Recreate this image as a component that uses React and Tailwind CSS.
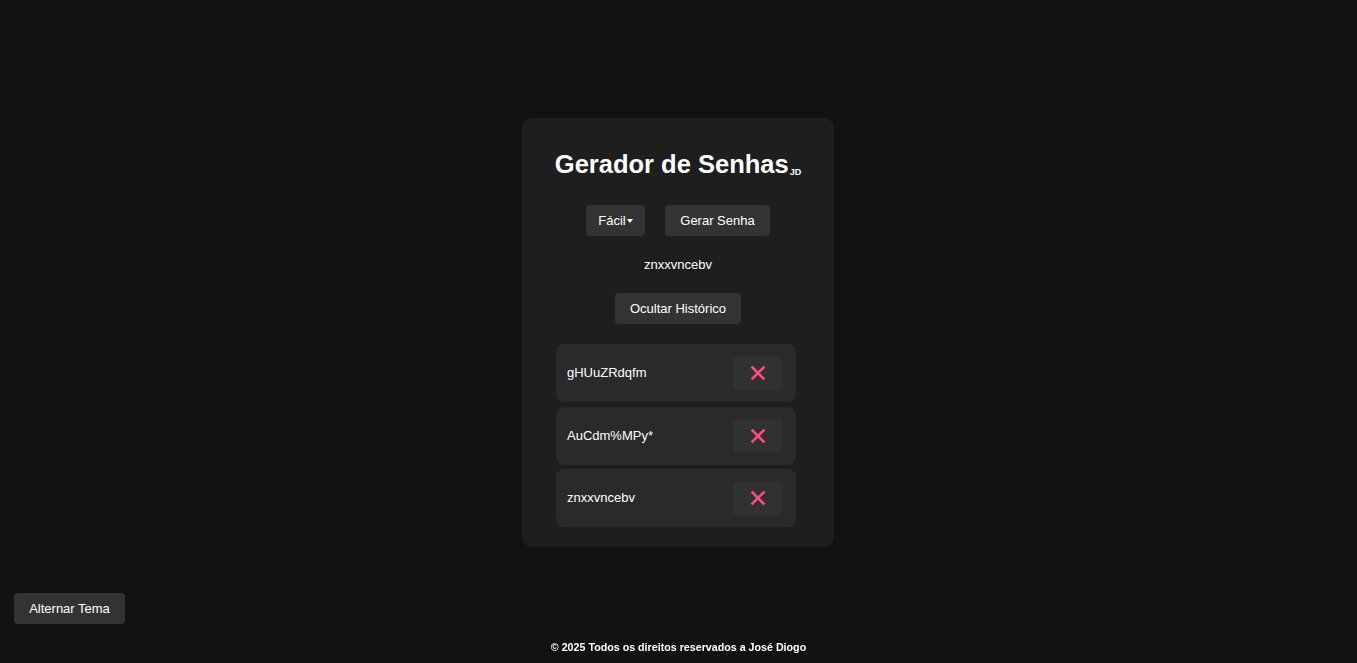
import React, { useState } from 'react';

const XIcon = () => (
  <svg width="16" height="16" viewBox="0 0 16 16" fill="none">
    <path d="M2.5 2.5 L13.5 13.5 M13.5 2.5 L2.5 13.5" stroke="#ff4d7d" strokeWidth="2.6" strokeLinecap="square" />
  </svg>
);

const App = () => {
  const [history, setHistory] = useState(['gHUuZRdqfm', 'AuCdm%MPy*', 'znxxvncebv']);
  const [showHistory, setShowHistory] = useState(true);

  return (
    <div
      className="min-h-screen bg-[#121212] text-white flex items-center justify-center"
      style={{ fontFamily: '"Liberation Sans", Arial, sans-serif' }}
    >
      {/* Card */}
      <div className="w-[312px] mt-[2px] mr-[1px] bg-[#1e1e1e] rounded-[10px] pt-8 pb-5 px-[34px] flex flex-col items-center">
        <h1 className="text-[25.5px] font-bold leading-[29px] mb-[26px] whitespace-nowrap">
          Gerador de Senhas<sub className="text-[9px] font-bold leading-none ml-[1px]">JD</sub>
        </h1>

        <div className="flex gap-5">
          <button className="w-[59px] h-[31px] bg-[#333] rounded-[4px] text-[13px] flex items-center justify-center">
            Fácil
            <span className="ml-[1px] w-0 h-0 border-l-[3.5px] border-r-[3.5px] border-t-[4px] border-l-transparent border-r-transparent border-t-white" />
          </button>
          <button className="w-[105px] h-[31px] bg-[#333] rounded-[4px] text-[13px]">Gerar Senha</button>
        </div>

        <p className="mt-[21px] text-[13px] leading-[15px]">znxxvncebv</p>

        <button
          onClick={() => setShowHistory(!showHistory)}
          className="mt-[21px] w-[126px] h-[31px] bg-[#333] rounded-[4px] text-[13px]"
        >
          Ocultar Histórico
        </button>

        {showHistory && (
          <div className="mt-5 w-[240px] self-start flex flex-col gap-[4.5px]">
            {history.map((pw, i) => (
              <div key={i} className="h-[58px] bg-[#2a2a2a] rounded-[8px] pl-[11px] pr-[13px] flex items-center justify-between">
                <span className="text-[13px]">{pw}</span>
                <button
                  onClick={() => setHistory(history.filter((_, j) => j !== i))}
                  className="w-[50px] h-[33px] bg-[#313131] rounded-[4px] flex items-center justify-center"
                >
                  <XIcon />
                </button>
              </div>
            ))}
          </div>
        )}
      </div>

      {/* Theme toggle */}
      <button className="fixed left-[14px] bottom-[39px] w-[111px] h-[31px] bg-[#333] rounded-[4px] text-[13px]">
        Alternar Tema
      </button>

      {/* Footer */}
      <footer className="fixed left-0 right-0 bottom-[9px] text-center text-[10.7px] font-bold leading-[13px]">
        © 2025 Todos os direitos reservados a José Diogo
      </footer>
    </div>
  );
};

export default App;
